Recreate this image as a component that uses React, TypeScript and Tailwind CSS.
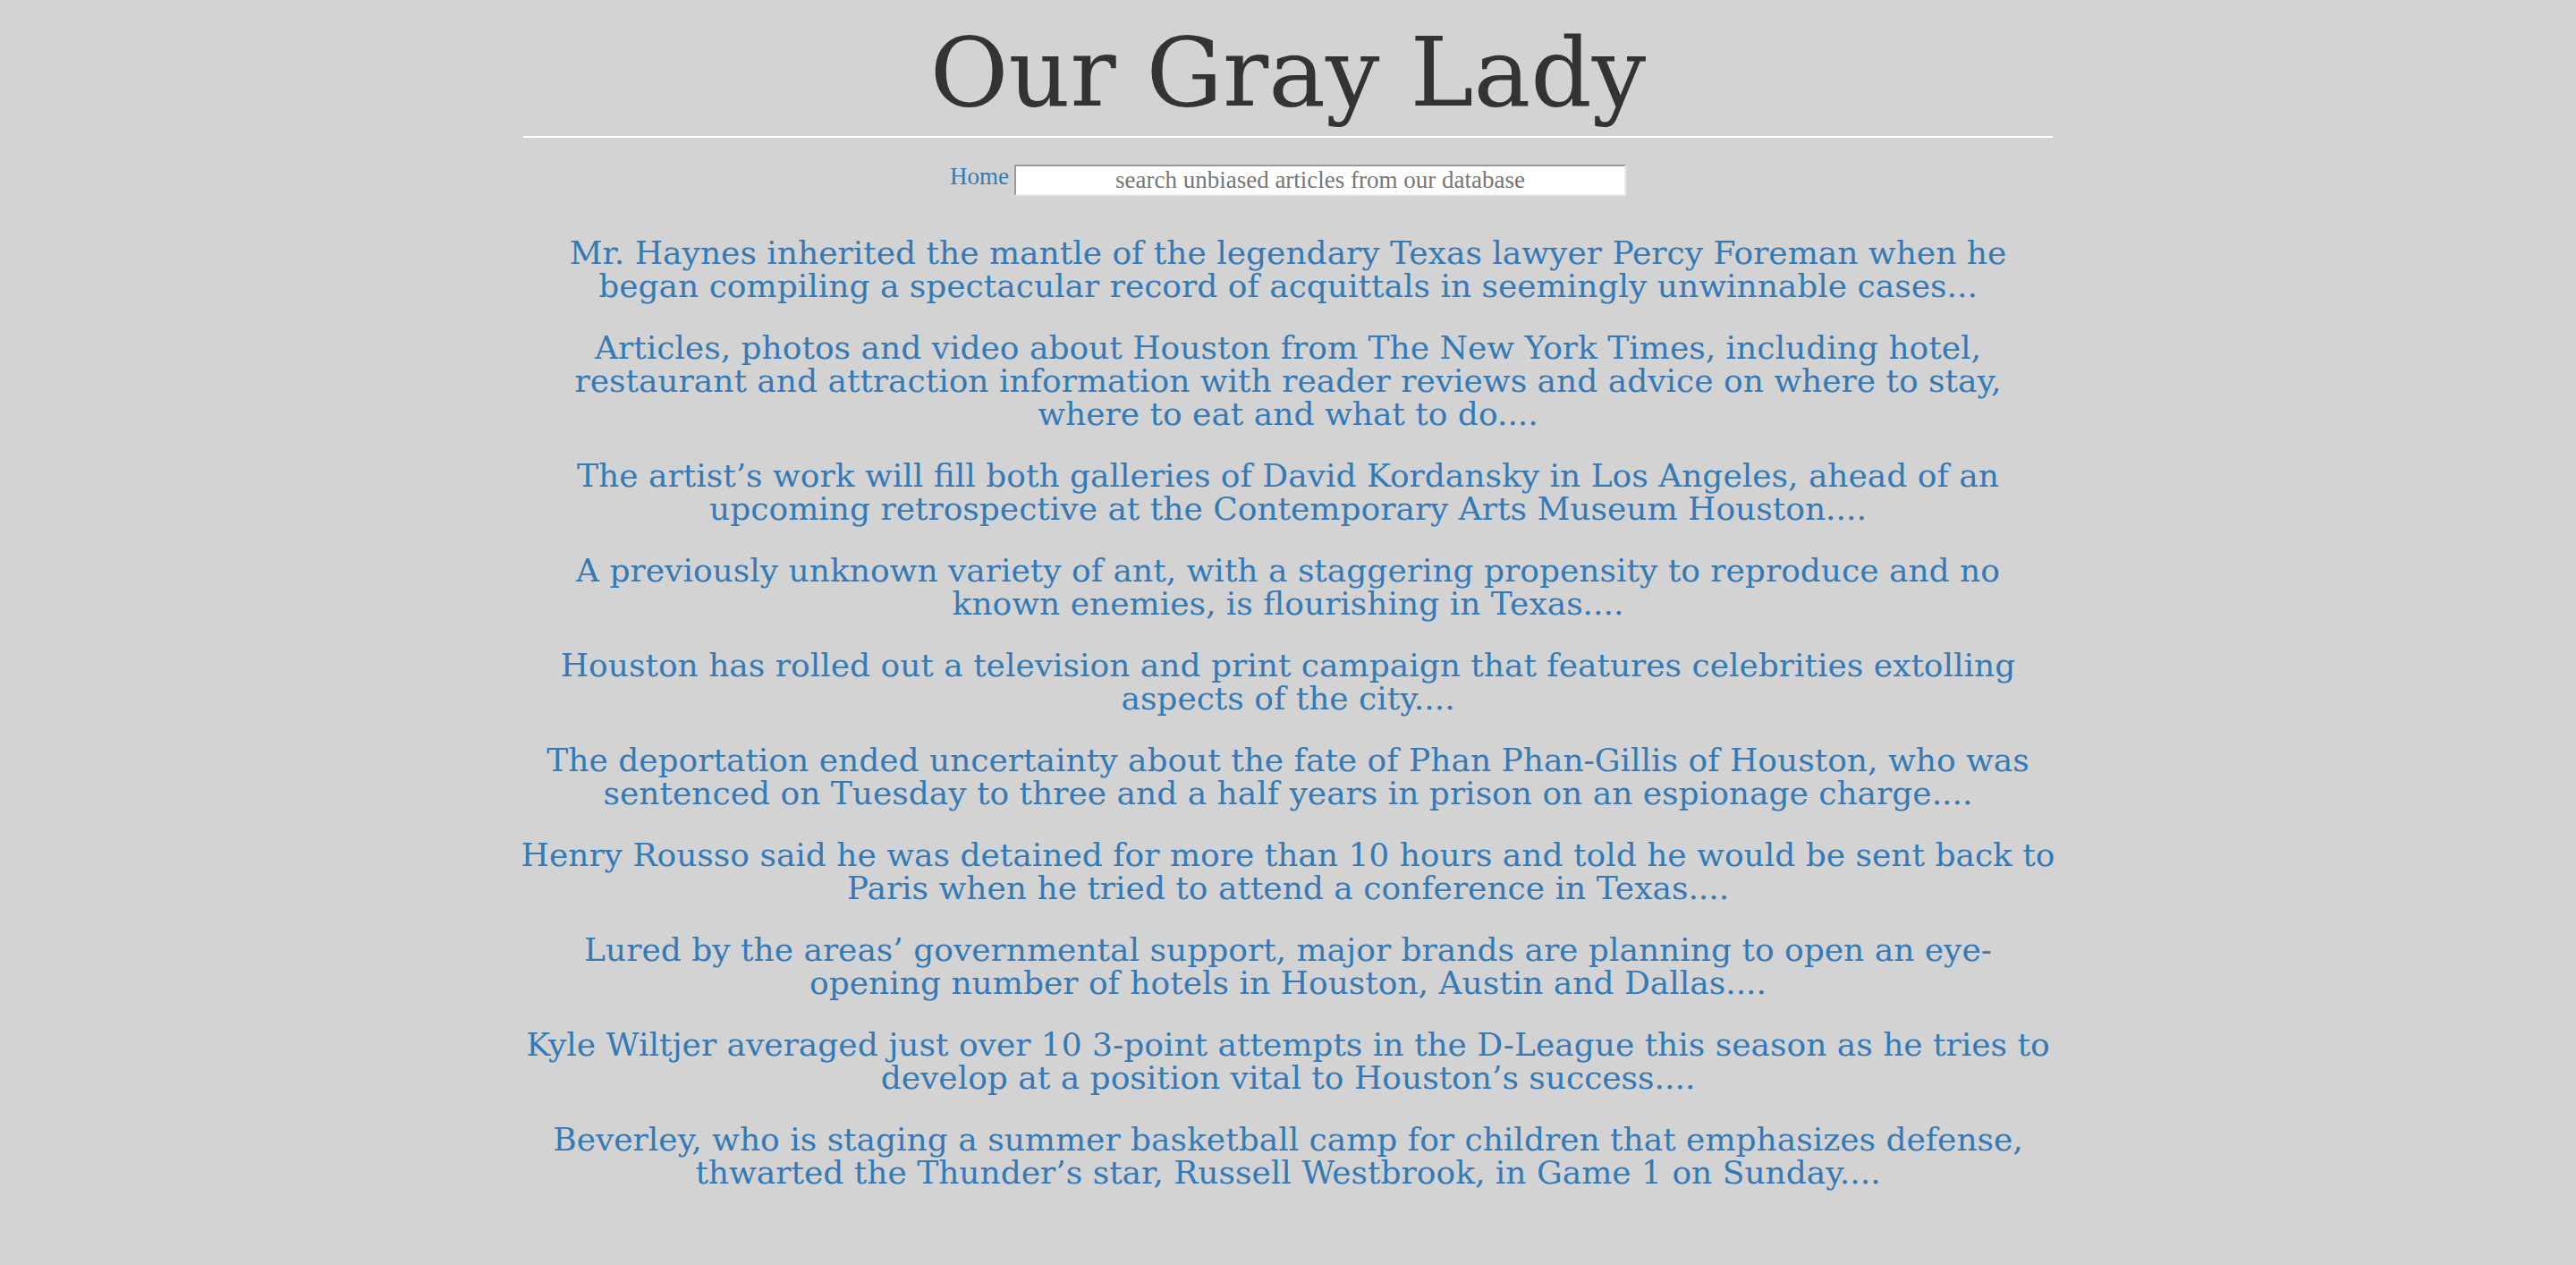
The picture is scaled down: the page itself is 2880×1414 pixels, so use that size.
import React from "react";

const articles: string[][] = [
  [
    "Mr. Haynes inherited the mantle of the legendary Texas lawyer Percy Foreman when he",
    "began compiling a spectacular record of acquittals in seemingly unwinnable cases...",
  ],
  [
    "Articles, photos and video about Houston from The New York Times, including hotel,",
    "restaurant and attraction information with reader reviews and advice on where to stay,",
    "where to eat and what to do....",
  ],
  [
    "The artist’s work will fill both galleries of David Kordansky in Los Angeles, ahead of an",
    "upcoming retrospective at the Contemporary Arts Museum Houston....",
  ],
  [
    "A previously unknown variety of ant, with a staggering propensity to reproduce and no",
    "known enemies, is flourishing in Texas....",
  ],
  [
    "Houston has rolled out a television and print campaign that features celebrities extolling",
    "aspects of the city....",
  ],
  [
    "The deportation ended uncertainty about the fate of Phan Phan-Gillis of Houston, who was",
    "sentenced on Tuesday to three and a half years in prison on an espionage charge....",
  ],
  [
    "Henry Rousso said he was detained for more than 10 hours and told he would be sent back to",
    "Paris when he tried to attend a conference in Texas....",
  ],
  [
    "Lured by the areas’ governmental support, major brands are planning to open an eye-",
    "opening number of hotels in Houston, Austin and Dallas....",
  ],
  [
    "Kyle Wiltjer averaged just over 10 3-point attempts in the D-League this season as he tries to",
    "develop at a position vital to Houston’s success....",
  ],
  [
    "Beverley, who is staging a summer basketball camp for children that emphasizes defense,",
    "thwarted the Thunder’s star, Russell Westbrook, in Game 1 on Sunday....",
  ],
];

export default function App() {
  return (
    <div className="min-h-[1414px] w-full bg-[#d3d3d3]">
      <div className="mx-auto w-[1710px]">
        {/* Masthead */}
        <h1 className="pt-[28px] text-center font-['DejaVu_Serif',serif] text-[107px] leading-[107px] font-normal text-[#333333]">
          Our Gray Lady
        </h1>
        <div className="mt-[17px] h-[2px] w-full bg-white" />

        {/* Nav + search */}
        <div className="mt-[30px] flex items-start justify-center gap-[6px]">
          <a
            href="#"
            className="mt-[1px] font-['Liberation_Serif',serif] text-[27px] leading-[25px] text-[#337ab7]"
          >
            Home
          </a>
          <input
            type="text"
            placeholder="search unbiased articles from our database"
            className="h-[35px] w-[684px] border-2 border-t-[#999999] border-l-[#999999] border-r-[#ececec] border-b-[#ececec] bg-white text-center font-['Liberation_Serif',serif] text-[27px] text-[#333] outline-none placeholder:text-[#767676]"
          />
        </div>

        {/* Article list */}
        <div className="mt-[45px] flex flex-col gap-[32px]">
          {articles.map((lines, i) => (
            <a
              key={i}
              href="#"
              className="flex flex-col items-center font-['DejaVu_Serif',serif] text-[36px] leading-[37px] text-[#337ab7]"
            >
              {lines.map((line, j) => (
                <span key={j} className="whitespace-nowrap">
                  {line}
                </span>
              ))}
            </a>
          ))}
        </div>
      </div>
    </div>
  );
}
